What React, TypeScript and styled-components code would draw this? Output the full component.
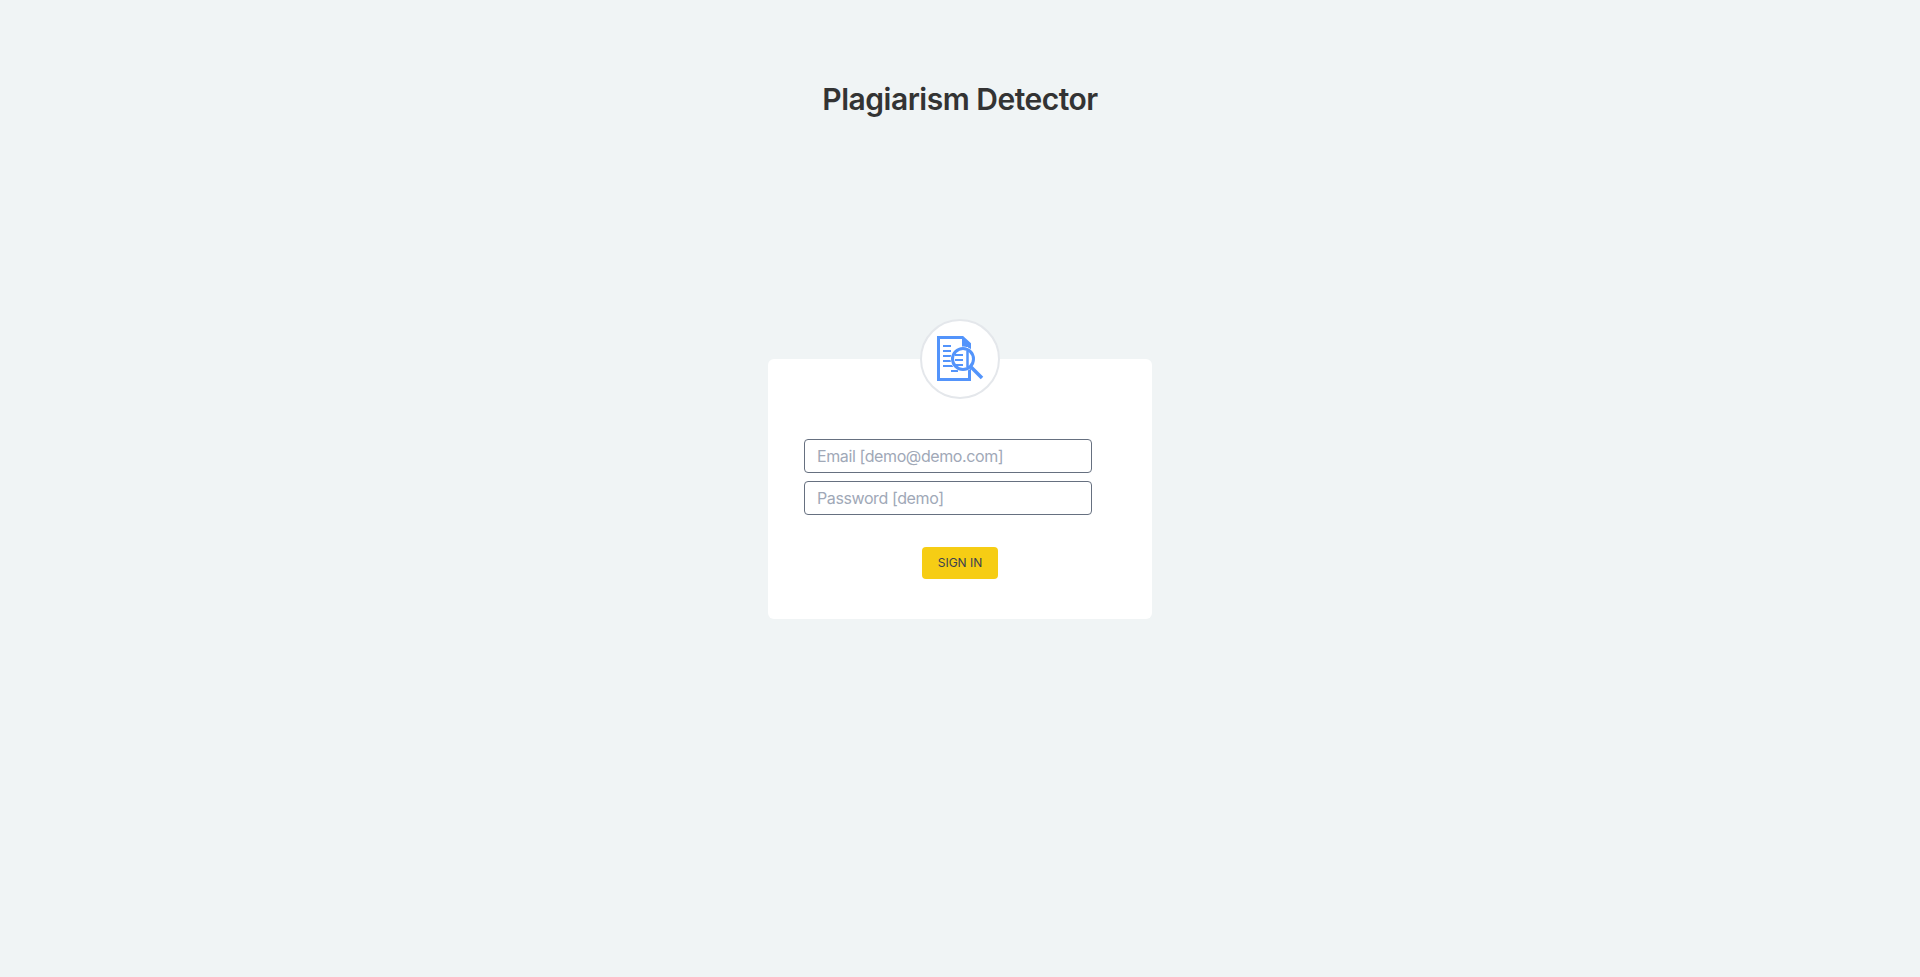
import React from 'react'
import styled, { createGlobalStyle } from 'styled-components'

const GlobalStyle = createGlobalStyle`
    html, body {
        margin: 0;
        padding: 0;
        background-color: #f0f4f5;
        font-family: Inter, "Liberation Sans", sans-serif;
    }
`

const Page = styled.div`
    min-height: 977px;
    display: flex;
    flex-direction: column;
    align-items: center;
    box-sizing: border-box;
    padding-top: 80px;
`

const Title = styled.h1`
    margin: 0;
    font-size: 30px;
    line-height: 38px;
    font-weight: 600;
    letter-spacing: -0.5px;
    color: #333333;
`

const Card = styled.form`
    position: relative;
    box-sizing: border-box;
    width: 384px;
    height: 260px;
    margin-top: 241px;
    padding: 80px 60px 0 36px;
    background: #ffffff;
    border-radius: 6px;
    display: flex;
    flex-direction: column;
    align-items: flex-start;
`

const Badge = styled.div`
    position: absolute;
    top: -40px;
    left: 152px;
    width: 80px;
    height: 80px;
    box-sizing: border-box;
    display: flex;
    align-items: center;
    justify-content: center;
    background: #ffffff;
    border: 2px solid #e4e7eb;
    border-radius: 50%;
`

const Input = styled.input`
    box-sizing: border-box;
    width: 288px;
    height: 34px;
    margin-bottom: 8px;
    padding: 0 12px;
    background: #ffffff;
    border: 1px solid #667080;
    border-radius: 4px;
    outline: none;
    font-family: inherit;
    font-size: 16px;
    letter-spacing: -0.4px;
    color: #333333;

    &::placeholder {
        color: #a0a8b7;
        opacity: 1;
    }
`

const SignIn = styled.button`
    align-self: center;
    box-sizing: border-box;
    width: 76px;
    height: 32px;
    margin: 24px 0 0 24px;
    padding: 0 0 1px;
    background: #f6cd14;
    border: none;
    border-radius: 4px;
    font-family: inherit;
    font-size: 12px;
    color: #3c4150;
`

const DocSearchIcon: React.FC = () => (
    <svg width='48' height='48' viewBox='0 0 48 48' fill='none'>
        <path d='M2.5 2.5H26.5L33.5 9V44.5H2.5Z' stroke='#5394fb' strokeWidth='3' />
        <path d='M26 2L34 9.5V12H26Z' fill='#5394fb' />
        <path d='M7 11H15M7 16H15M7 21H17M7 26H17M7 31H17M15 36H22' stroke='#5394fb' strokeWidth='2.2' />
        <circle cx='27' cy='24' r='12.5' fill='#ffffff' />
        <path d='M19 20H27M19 25H27M19 30H27' stroke='#5394fb' strokeWidth='2.2' />
        <path d='M31.5 16V32' stroke='#5394fb' strokeWidth='2.5' />
        <circle cx='27' cy='24' r='10.5' stroke='#5394fb' strokeWidth='3' />
        <path d='M35 32L46 43' stroke='#5394fb' strokeWidth='3.5' />
    </svg>
)

const App: React.FC = () => (
    <Page>
        <GlobalStyle />
        <Title>Plagiarism Detector</Title>
        <Card>
            <Badge>
                <DocSearchIcon />
            </Badge>
            <Input type='email' placeholder='Email [demo@demo.com]' />
            <Input type='password' placeholder='Password [demo]' />
            <SignIn type='button'>SIGN IN</SignIn>
        </Card>
    </Page>
)

export default App
